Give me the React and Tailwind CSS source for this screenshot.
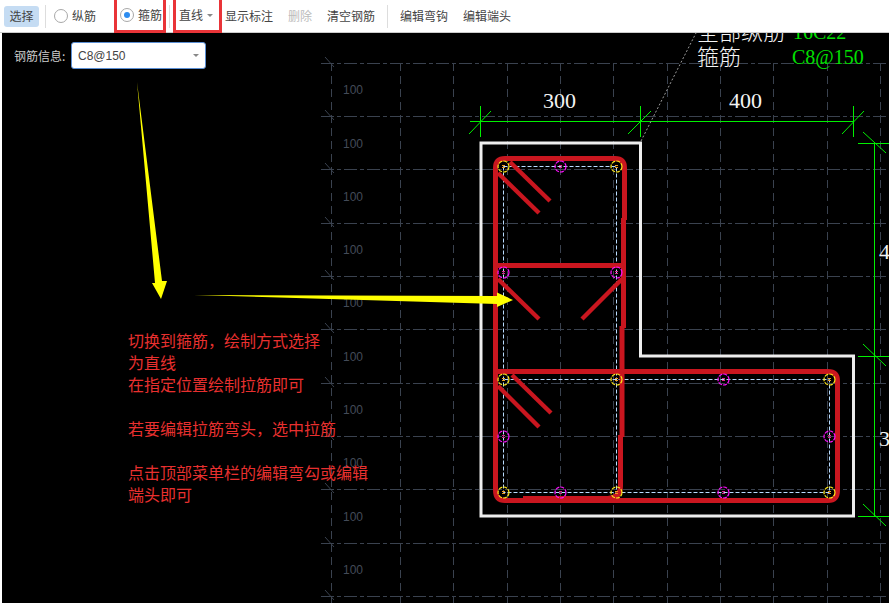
import React from "react";

const GRID_X = [331, 400, 453, 507, 560, 613, 667, 720, 773, 827, 880];
const GRID_Y = [63, 116, 169, 223, 276, 329, 383, 436, 489, 543, 596];
const LABEL_Y = [94, 148, 201, 254, 307, 361, 414, 467, 521, 574];
const YELLOW_DOTS = [[503, 166], [616, 166], [503, 379], [616, 379], [829, 379], [503, 492], [616, 492], [829, 492]];
const PINK_DOTS = [[560, 166], [503, 272], [616, 272], [503, 436], [829, 436], [560, 492], [723, 379], [723, 492]];
const HOOKS = [
  [510, 162, 550, 201],
  [498, 173, 539, 213],
  [498, 279, 539, 319],
  [622, 279, 582, 319],
  [512, 375, 551, 413],
  [498, 386, 539, 427],
];

const Radio = ({ checked, label }) => (
  <span className="flex items-center gap-[4px]">
    <span className="flex h-[14px] w-[14px] items-center justify-center rounded-full border border-[#a8a8a8] bg-white">
      {checked && <span className="h-[6px] w-[6px] rounded-full bg-[#2d8cf0]" />}
    </span>
    <span>{label}</span>
  </span>
);

const Caret = ({ className }) => (
  <span className={`h-0 w-0 border-x-[3px] border-t-[3px] border-x-transparent border-t-[#888] ${className}`} />
);

const Toolbar = () => (
  <div className="flex h-[33px] shrink-0 items-center border-b border-[#cccccc] bg-white text-[12px] text-[#444]">
    <button className="ml-[4px] h-[21px] w-[35px] rounded-[3px] bg-[#c5dcf3] text-[12px] text-[#444]">选择</button>
    <span className="ml-[6px] h-[23px] w-px bg-[#ddd]" />
    <span className="ml-[8px]">
      <Radio label="纵筋" />
    </span>
    <div className="ml-[18px] -mb-px flex items-center self-stretch border-x-[3px] border-b-[3px] border-[#e93438] pl-[3px] pr-[1px]">
      <Radio checked label="箍筋" />
    </div>
    <span className="ml-[3px] h-[23px] w-px bg-[#ddd]" />
    <div className="ml-[3px] -mb-px flex w-[49px] items-center self-stretch border-x-[3px] border-b-[3px] border-[#e93438] pl-[3px]">
      <span>直线</span>
      <Caret className="ml-[4px]" />
    </div>
    <span className="ml-[3px]">显示标注</span>
    <span className="ml-[15px] text-[#bbb]">删除</span>
    <span className="ml-[15px]">清空钢筋</span>
    <span className="ml-[12px] h-[23px] w-px bg-[#ddd]" />
    <span className="ml-[12px]">编辑弯钩</span>
    <span className="ml-[15px]">编辑端头</span>
  </div>
);

const Dot = ({ x, y, color, mark }) => (
  <g>
    <circle cx={x + 0.5} cy={y + 0.5} r="5.5" fill="none" stroke={color} strokeWidth="1.2" strokeDasharray="4 1" />
    <path d={`M${x - 1} ${y - 0.5}H${x + 2}M${x - 1} ${y + 1.5}H${x + 2}`} stroke={mark} strokeWidth="1" />
  </g>
);

const Drawing = () => (
  <svg className="absolute inset-0" width="887" height="570" viewBox="2 33 887 570">
    {/* axis grid */}
    <g stroke="#3a424f" strokeWidth="1">
      {GRID_X.map((x) => (
        <path key={x} d={`M${x + 0.5} 63V603`} strokeDasharray="8 5" />
      ))}
      {GRID_Y.map((y) => (
        <g key={y}>
          <path d={`M321 ${y + 0.5}H889`} strokeDasharray="13 3 4 3" />
          <path d={`M325 ${y - 6}L334 ${y + 4}`} />
        </g>
      ))}
    </g>
    <g fill="#434b58" fontFamily="'Liberation Sans', sans-serif" fontSize="12">
      {LABEL_Y.map((y) => (
        <text key={y} x="343" y={y}>100</text>
      ))}
    </g>

    {/* wall outline */}
    <path d="M481 143H640.5V356H853.5V516H481Z" fill="none" stroke="#eeeeee" strokeWidth="3" />

    {/* dimensions */}
    <g stroke="#00f000" strokeWidth="1" fill="none">
      <path d="M470 121.5H853.5" />
      <path d="M480.5 106V137M469 134L491 111" />
      <path d="M640.5 106V137M628 134L651 111" />
      <path d="M853.5 106V137M842 134L864 111" />
      <path d="M874.5 143V516" />
      <path d="M858 143.5H889M863 132L886 153" />
      <path d="M858 356.5H889M863 344L886 366" />
      <path d="M858 516.5H889M863 504L886 526" />
    </g>
    <g fill="#f4f4f4" fontFamily="'Liberation Serif', serif" fontSize="22">
      <text x="543" y="108">300</text>
      <text x="729" y="108">400</text>
      <text x="879" y="259">4</text>
      <text x="879" y="446">3</text>
    </g>

    {/* rebar note */}
    <path d="M641 141L696 33" stroke="#9a9a9a" strokeWidth="1" strokeDasharray="2 2" fill="none" />
    <g fill="#f4f4f4" fontFamily="'Noto Sans CJK SC', sans-serif" fontSize="22" fontWeight="300">
      <text x="697" y="40">全部纵筋</text>
      <text x="697" y="65">箍筋</text>
    </g>
    <g fill="#00e000" fontFamily="'Liberation Serif', serif" fontSize="20">
      <text x="793" y="39">16C22</text>
      <text x="792" y="64">C8@150</text>
    </g>

    {/* bar centre lines */}
    <g stroke="#b9dcff" strokeWidth="1" strokeDasharray="4 2" fill="none">
      <path d="M503.5 166.5H616.5V492.5" />
      <path d="M503.5 166.5V492.5H829.5V379.5H503.5" />
    </g>

    {/* stirrups */}
    <g stroke="#c9161f" fill="none" strokeWidth="5">
      <path d="M624.5 220V168Q624.5 158.5 615 158.5H505Q495.5 158.5 495.5 168V490Q495.5 500.5 505 500.5H828Q837.5 500.5 837.5 490V381Q837.5 371.5 828 371.5H497" />
      <path d="M623.5 218V328" />
      <path d="M622 326V437" />
      <path d="M620.5 435V486Q620.5 497.5 608 498.5H523" />
      <path d="M497 265.5H623" />
    </g>
    <g stroke="#c9161f" strokeWidth="4.4">
      {HOOKS.map(([x1, y1, x2, y2]) => (
        <line key={`${x1}-${y1}`} x1={x1} y1={y1} x2={x2} y2={y2} />
      ))}
    </g>

    {YELLOW_DOTS.map(([x, y]) => (
      <Dot key={`${x}-${y}`} x={x} y={y} color="#ffe81a" mark="#f0a020" />
    ))}
    {PINK_DOTS.map(([x, y]) => (
      <Dot key={`${x}-${y}`} x={x} y={y} color="#ff10ff" mark="#e02090" />
    ))}

    {/* arrows */}
    <polygon points="137,82 155,283 152,283 161,299 167,281 162,281" fill="#ffff00" />
    <polygon points="194,295 497,296 497,292.5 513,300 497,307 497,304" fill="#ffff00" />
  </svg>
);

const App = () => {
  return (
    <div className="flex h-[603px] w-[889px] flex-col overflow-hidden bg-white font-['Noto_Sans_CJK_SC',sans-serif]">
      <Toolbar />
      <main className="relative ml-[2px] flex-1 bg-black">
        <Drawing />
        <div className="relative flex items-center pl-[12px] pt-[9px]">
          <span className="w-[57px] text-[12px] text-[#cccccc]">钢筋信息:</span>
          <div className="flex h-[27px] w-[135px] items-center justify-between rounded-[3px] border border-[#5b8fd4] bg-white pl-[6px] pr-[6px] font-['Liberation_Sans',sans-serif] text-[12px] text-[#444]">
            <span>C8@150</span>
            <Caret />
          </div>
        </div>
        <div className="absolute left-[126px] top-[296px] w-[245px] text-[16px] leading-[22px] text-[#e8302f]">
          <p>切换到箍筋，绘制方式选择<br />为直线</p>
          <p>在指定位置绘制拉筋即可</p>
          <p className="mt-[22px]">若要编辑拉筋弯头，选中拉筋</p>
          <p className="mt-[22px]">点击顶部菜单栏的编辑弯勾或编辑<br />端头即可</p>
        </div>
      </main>
    </div>
  );
};

export default App;
